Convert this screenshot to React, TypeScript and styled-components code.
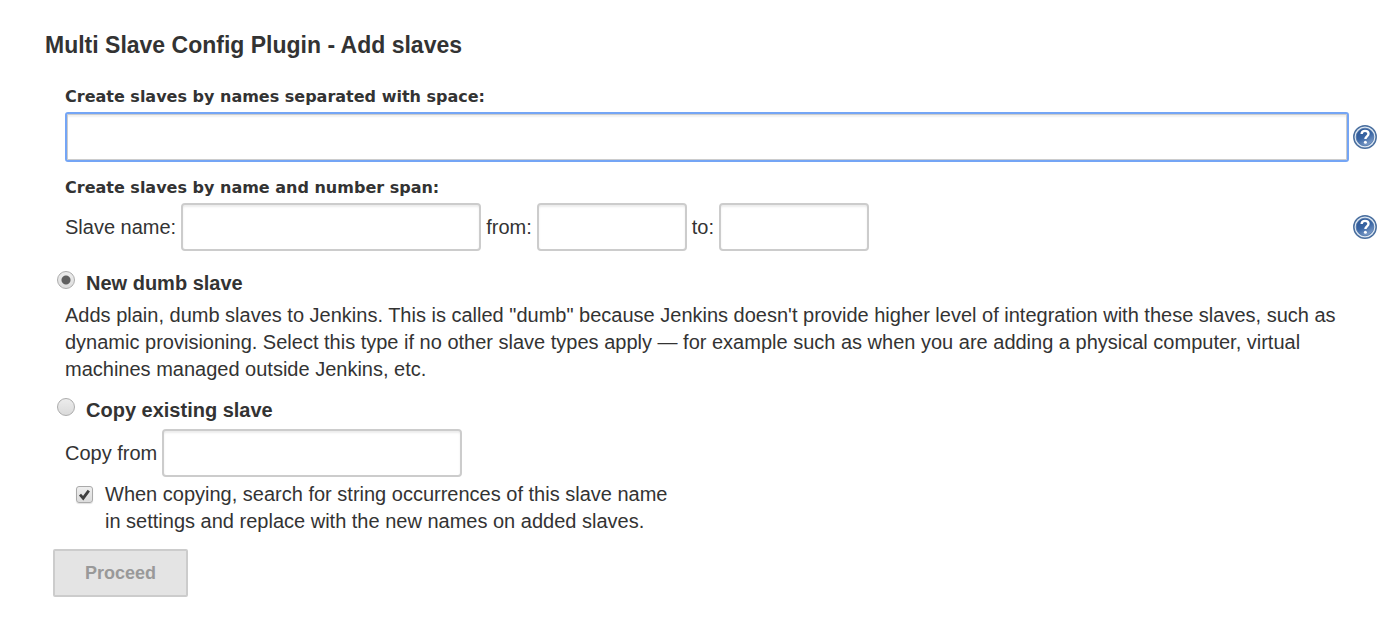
import React, { useId, useState } from 'react';
import styled, { createGlobalStyle } from 'styled-components';

const GlobalStyle = createGlobalStyle`
  *, *::before, *::after { box-sizing: border-box; }
  body {
    margin: 0;
    background: #fff;
    color: #333;
    font: 20px/27px "Liberation Sans", Arial, Helvetica, sans-serif;
  }
`;

const Page = styled.main`
  padding: 30px 0 28px 45px;
`;

const Title = styled.h1`
  margin: 0 0 23px;
  font-size: 23px;
  line-height: 30px;
  font-weight: bold;
`;

const Section = styled.section<{ $gap?: number }>`
  padding-left: 20px;
  margin-bottom: ${({ $gap = 12 }) => $gap}px;
`;

const Caption = styled.label`
  display: block;
  margin-bottom: 2px;
  font-family: "DejaVu Sans", Verdana, sans-serif;
  font-size: 16px;
  font-weight: bold;
`;

const GroupCaption = styled(Caption).attrs({ as: 'h2' })`
  margin-top: 0;
`;

const Row = styled.div`
  display: flex;
  align-items: center;
  gap: 5px;
`;

const HelpRow = styled(Row)`
  justify-content: space-between;
  gap: 4px;
`;

const TextInput = styled.input<{ $width?: number }>`
  width: ${({ $width }) => ($width ? `${$width}px` : '100%')};
  height: 48px;
  padding: 4px 8px;
  border: 2px solid #ccc;
  border-radius: 4px;
  background: #fff;
  box-shadow: inset 0 2px 2px rgba(0, 0, 0, 0.075);
  color: inherit;
  font: inherit;
  outline: none;
`;

const ActiveInput = styled(TextInput)`
  flex: 1;
  min-width: 0;
  height: 50px;
  border-color: #74a5f5;
  border-radius: 3px;
  box-shadow: inset 0 0 0 1px #ccc, inset 0 3px 2px rgba(0, 0, 0, 0.06);
`;

const HelpButton = styled.button`
  display: block;
  flex: none;
  width: 24px;
  height: 24px;
  padding: 0;
  border: 0;
  background: none;
  cursor: pointer;

  svg { display: block; }
`;

const Option = styled.div`
  display: flex;
  align-items: flex-start;
  gap: 11px;
  margin: 0 0 5px 12px;
  font-weight: bold;
`;

const Radio = styled.input.attrs({ type: 'radio' })`
  appearance: none;
  width: 18px;
  height: 18px;
  margin: 1px 0 0;
  border: 1px solid #acacac;
  border-radius: 50%;
  background: linear-gradient(#ececec, #dadada);

  &:checked {
    background: radial-gradient(circle, #606060 0 4px, transparent 5px), linear-gradient(#ececec, #dedede);
  }
`;

const Description = styled.p`
  max-width: 1290px;
  margin: 0;
`;

const CheckRow = styled.div`
  display: flex;
  align-items: flex-start;
  gap: 12px;
  margin: 4px 0 14px 11px;
`;

const CheckHolder = styled.span`
  display: grid;
  margin-top: 5px;

  input, svg { grid-area: 1 / 1; }
  svg { pointer-events: none; visibility: hidden; }
  input:checked + svg { visibility: visible; }
`;

const Checkbox = styled.input.attrs({ type: 'checkbox' })`
  appearance: none;
  width: 17px;
  height: 17px;
  margin: 0;
  border: 1px solid #aaa;
  border-radius: 3px;
  background: linear-gradient(#eee, #dcdcdc);
  box-shadow: 0 1px 1px rgba(0, 0, 0, 0.12);
`;

const CheckLabel = styled.label`
  max-width: 574px;
`;

const Proceed = styled.button`
  display: block;
  height: 48px;
  margin-left: 8px;
  padding: 0 30px;
  border: 2px solid #ccc;
  border-radius: 2px;
  background: #e4e4e4;
  color: #999;
  font: bold 18px/27px "Liberation Sans", Arial, Helvetica, sans-serif;
`;

function Help({ topic }: { topic: string }) {
  const gradient = useId();
  return (
    <HelpButton type="button" aria-label={`Help: ${topic}`}>
      <svg width="24" height="24" viewBox="0 0 24 24" aria-hidden="true">
        <defs>
          <linearGradient id={gradient} x1="0.2" y1="0" x2="0.7" y2="1">
            <stop offset="0" stopColor="#2a5492" />
            <stop offset="0.5" stopColor="#3a66a5" />
            <stop offset="1" stopColor="#86a3cc" />
          </linearGradient>
        </defs>
        <circle cx="12" cy="12" r="11.2" fill="#dfe8f2" stroke="#4a6f9f" strokeWidth="1.5" />
        <circle cx="12" cy="12" r="8.8" fill={`url(#${gradient})`} stroke="#4a72a8" strokeWidth="0.8" />
        <path d="M8.6 9C8.8 6.8 10.2 5.9 12 5.9c2.1 0 3.5 1.1 3.5 2.9 0 2.4-3.1 2.6-3.1 5.1" fill="none" stroke="#fff" strokeWidth="2.4" />
        <circle cx="12.4" cy="17.2" r="1.5" fill="#fff" />
      </svg>
    </HelpButton>
  );
}

export default function App() {
  const [mode, setMode] = useState('dumb');
  const [replace, setReplace] = useState(true);

  return (
    <>
      <GlobalStyle />
      <Page>
        <Title>Multi Slave Config Plugin - Add slaves</Title>
        <form onSubmit={(event) => event.preventDefault()}>
          <Section>
            <Caption htmlFor="names">Create slaves by names separated with space:</Caption>
            <HelpRow>
              <ActiveInput id="names" type="text" />
              <Help topic="slave names" />
            </HelpRow>
          </Section>
          <Section $gap={19}>
            <GroupCaption>Create slaves by name and number span:</GroupCaption>
            <HelpRow>
              <Row>
                <label htmlFor="base">Slave name:</label>
                <TextInput id="base" type="text" $width={300} />
                <label htmlFor="first">from:</label>
                <TextInput id="first" type="text" $width={150} />
                <label htmlFor="last">to:</label>
                <TextInput id="last" type="text" $width={150} />
              </Row>
              <Help topic="name and number span" />
            </HelpRow>
          </Section>
          <Option>
            <Radio id="dumb" name="mode" checked={mode === 'dumb'} onChange={() => setMode('dumb')} />
            <label htmlFor="dumb">New dumb slave</label>
          </Option>
          <Section $gap={14}>
            <Description>
              Adds plain, dumb slaves to Jenkins. This is called "dumb" because Jenkins doesn't provide higher level of
              integration with these slaves, such as dynamic provisioning. Select this type if no other slave types
              apply — for example such as when you are adding a physical computer, virtual machines managed outside
              Jenkins, etc.
            </Description>
          </Section>
          <Option>
            <Radio id="copy" name="mode" checked={mode === 'copy'} onChange={() => setMode('copy')} />
            <label htmlFor="copy">Copy existing slave</label>
          </Option>
          <Section>
            <Row>
              <label htmlFor="source">Copy from</label>
              <TextInput id="source" type="text" $width={300} />
            </Row>
            <CheckRow>
              <CheckHolder>
                <Checkbox id="replace" checked={replace} onChange={(event) => setReplace(event.target.checked)} />
                <svg width="17" height="17" viewBox="0 0 17 17" aria-hidden="true">
                  <path d="M4 8.6l3.2 3.6L12.8 4.6" fill="none" stroke="#404040" strokeWidth="2.8" />
                </svg>
              </CheckHolder>
              <CheckLabel htmlFor="replace">
                When copying, search for string occurrences of this slave name in settings and replace with the new
                names on added slaves.
              </CheckLabel>
            </CheckRow>
          </Section>
          <Proceed type="submit" disabled>Proceed</Proceed>
        </form>
      </Page>
    </>
  );
}
